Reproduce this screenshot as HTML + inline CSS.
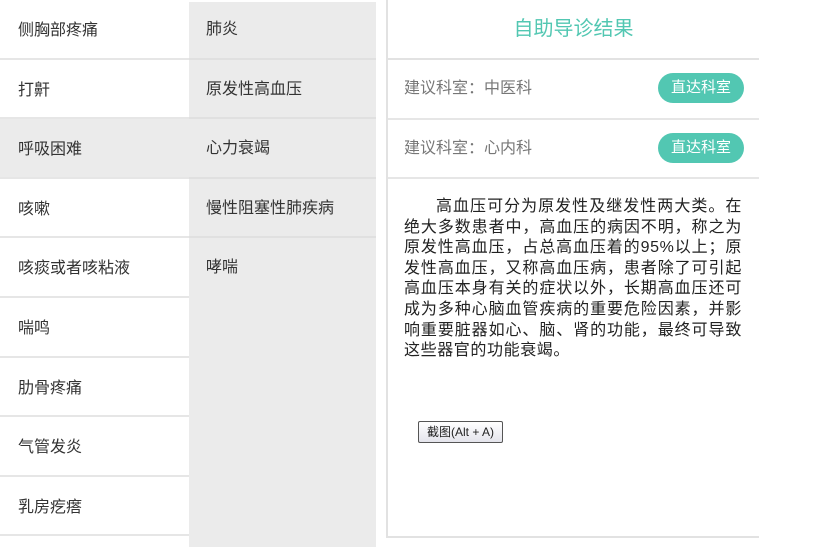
<!DOCTYPE html>
<html><head><meta charset="utf-8"><style>
*{margin:0;padding:0;box-sizing:border-box}
body{width:818px;height:545px;background:#fff;font-family:"Liberation Sans","Noto Sans CJK SC",sans-serif;position:relative;overflow:hidden}
.c1{position:absolute;left:0;top:0;width:189px}
.c1 div{height:59.6px;border-bottom:2px solid #e6e6e6;padding-left:18px;line-height:61px;font-size:16px;color:#333}
.c1 div.sel{background:#ebebeb}
.c2{position:absolute;left:189px;top:2px;width:187px;height:545px;background:#ebebeb}
.c2 div{height:59.6px;border-bottom:2px solid #e0e0e0;padding-left:17px;line-height:60px;font-size:16px;color:#333}
.c2 div:first-child{height:57.6px;line-height:56px}
.c2 div.nb{border:none}
.r{position:absolute;left:386px;top:0;width:373px;height:538px;border-left:2px solid #e2e2e2;border-bottom:2px solid #e2e2e2}
.t{height:60px;border-bottom:2px solid #e2e2e2;text-align:center;line-height:58px;font-size:20px;color:#52c7b2}
.d{height:59.5px;border-bottom:2px solid #e6e6e6;position:relative;font-size:16px;color:#777;line-height:57px;padding-left:16px}
.b{position:absolute;left:270px;top:13px;width:86px;height:30px;border-radius:15px;background:#52c7b2;color:#fff;font-size:15px;line-height:30px;text-align:center}
.p{margin:18px 0 0 16px;width:338px;font-size:16px;letter-spacing:0.6px;line-height:20.6px;color:#222;text-indent:2em;text-align:justify}
.k{position:absolute;left:418px;top:421px;width:85px;height:22px;border:1px solid #555;border-radius:2px;background:linear-gradient(#fff,#e4e4ec);font-size:12px;line-height:20px;text-align:center;color:#222}
</style></head><body>
<div class="c1"><div>侧胸部疼痛</div><div>打鼾</div><div class="sel">呼吸困难</div><div>咳嗽</div><div>咳痰或者咳粘液</div><div>喘鸣</div><div>肋骨疼痛</div><div>气管发炎</div><div>乳房疙瘩</div></div>
<div class="c2"><div>肺炎</div><div>原发性高血压</div><div>心力衰竭</div><div>慢性阻塞性肺疾病</div><div class="nb">哮喘</div></div>
<div class="r">
<div class="t">自助导诊结果</div>
<div class="d">建议科室：中医科<span class="b">直达科室</span></div>
<div class="d">建议科室：心内科<span class="b">直达科室</span></div>
<div class="p">高血压可分为原发性及继发性两大类。在绝大多数患者中，高血压的病因不明，称之为原发性高血压，占总高血压着的95%以上；原发性高血压，又称高血压病，患者除了可引起高血压本身有关的症状以外，长期高血压还可成为多种心脑血管疾病的重要危险因素，并影响重要脏器如心、脑、肾的功能，最终可导致这些器官的功能衰竭。</div>
</div>
<div class="k">截图(Alt + A)</div>
</body></html>
